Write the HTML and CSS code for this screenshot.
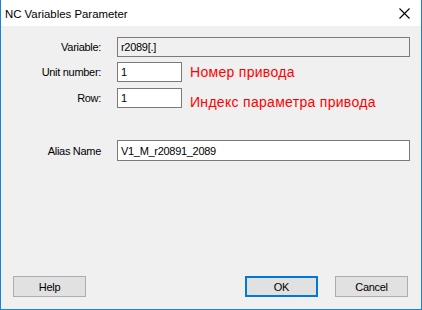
FILE: index.html
```html
<!DOCTYPE html>
<html lang="en">
<head>
    <meta charset="UTF-8">
    <title>NC Variables Parameter</title>
    <link rel="stylesheet" href="styles.css">
</head>
<body>
    <div class="window">
        <!-- title bar -->
        <div class="titlebar">
            <span class="title">NC Variables Parameter</span>
            <svg class="close" width="11" height="11" viewBox="0 0 11 11">
                <path d="M0.5 0.5 L10.5 10.5 M10.5 0.5 L0.5 10.5" stroke="#000" stroke-width="1.1" fill="none"/>
            </svg>
        </div>

        <div class="content">
            <div class="row row-var">
                <label class="label">Variable:</label>
                <input class="field field-ro" type="text" value="r2089[.]" readonly>
            </div>
            <div class="row row-unit">
                <label class="label">Unit number:</label>
                <input class="field field-small" type="text" value="1">
                <span class="hint">Номер привода</span>
            </div>
            <div class="row row-row">
                <label class="label">Row:</label>
                <input class="field field-small" type="text" value="1">
                <span class="hint hint-low">Индекс параметра привода</span>
            </div>
            <div class="row row-alias">
                <label class="label">Alias Name</label>
                <input class="field field-alias" type="text" value="V1_M_r20891_2089">
            </div>
        </div>

        <!-- buttons -->
        <div class="footer">
            <button class="btn">Help</button>
            <span class="spacer"></span>
            <button class="btn btn-default">OK</button>
            <button class="btn">Cancel</button>
        </div>
    </div>
</body>
</html>
```

FILE: styles.css
```css
body {
    margin: 0;
    font-family: 'Liberation Sans', Arial, sans-serif;
    font-size: 11px;
    color: #000;
}

.window {
    box-sizing: border-box;
    width: 422px;
    height: 310px;
    background: #f0f0f0;
    border: 1px solid #1883d7;
    border-top: none;
    display: flex;
    flex-direction: column;
}

.titlebar {
    height: 26px;
    background: #ffffff;
    display: flex;
    align-items: center;
    justify-content: space-between;
    padding: 0 11px 0 4px;
}

.title {
    font-size: 11.4px;
    margin-top: 1px;
}

.close {
    margin-top: 1px;
}

.content {
    padding: 0 11px 0 0;
}

.row {
    display: flex;
    align-items: center;
}

.label {
    width: 100px;
    margin-right: 16px;
    text-align: right;
    letter-spacing: -0.3px;
}

.field {
    box-sizing: border-box;
    height: 20px;
    margin: 0;
    padding: 0 3px;
    border: 1px solid #7a7a7a;
    background: #ffffff;
    font-family: 'Liberation Sans', Arial, sans-serif;
    font-size: 11px;
    letter-spacing: -0.3px;
    color: #000;
    outline: none;
}

.field-ro {
    flex: 1;
    background: #f0f0f0;
}

.field-small {
    width: 65px;
}

.field-alias {
    flex: 1;
    height: 21px;
}

.row-var {
    margin-top: 11px;
}

.row-unit {
    margin-top: 5px;
}

.row-row {
    margin-top: 6px;
}

.row-alias {
    margin-top: 32px;
}

.hint {
    margin-left: 8px;
    color: #ff0000;
    font-size: 14px;
    letter-spacing: 0.3px;
}

.hint-low {
    position: relative;
    top: 4px;
}

.footer {
    margin-top: auto;
    margin-bottom: 12px;
    display: flex;
    padding: 0 13px 0 12px;
}

.spacer {
    flex: 1;
}

.btn {
    box-sizing: border-box;
    width: 73px;
    height: 21px;
    margin: 0;
    padding: 0;
    background: #e1e1e1;
    border: 1px solid #adadad;
    font-family: 'Liberation Sans', Arial, sans-serif;
    font-size: 11px;
    letter-spacing: -0.3px;
    color: #000;
}

.btn-default {
    border: 2px solid #0078d7;
    margin-right: 17px;
}
```
